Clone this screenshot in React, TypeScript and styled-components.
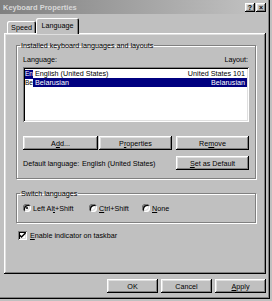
import React from "react";
import styled, { createGlobalStyle, css } from "styled-components";

const FACE = "#c0c0c0";
const FONT = `"Liberation Sans", Arial, sans-serif`;

const GlobalStyle = createGlobalStyle`
  html, body { margin: 0; padding: 0; background: ${FACE}; }
  body { font-family: ${FONT}; font-size: 7.2px; line-height: 9px; color: #000; }
  *, *::before, *::after { box-sizing: border-box; }
`;

const raised = css`
  box-shadow: inset -1px -1px #000, inset 1px 1px #fff, inset -2px -2px #808080,
    inset 2px 2px #dfdfdf;
`;
const sunken = css`
  box-shadow: inset 1px 1px #808080, inset -1px -1px #fff, inset 2px 2px #000,
    inset -2px -2px #dfdfdf;
`;

const Window = styled.div`
  width: 270px;
  height: 299px;
  background: ${FACE};
  box-shadow: inset -1px -1px #000, inset -2px -2px #808080;
  display: flex;
  flex-direction: column;
`;

const TitleBar = styled.div`
  height: 14px;
  margin-right: 2px;
  padding: 0 2px 0 3px;
  display: flex;
  align-items: center;
  justify-content: space-between;
  background: linear-gradient(to right, #808080, #c4c4c4);
  color: #d8d8d8;
  font-weight: bold;
  font-size: 7.5px;
`;

const TitleButtons = styled.div`
  display: flex;
  gap: 1px;
`;

const TitleButton = styled.div`
  width: 10px;
  height: 9px;
  background: ${FACE};
  ${raised};
  color: #000;
  font-weight: bold;
  font-size: 7px;
  line-height: 9px;
  display: flex;
  align-items: center;
  justify-content: center;
`;

const Body = styled.div`
  display: flex;
  flex-direction: column;
  padding: 0 4px;
`;

const TabStrip = styled.div`
  height: 15px;
  margin-top: 4px;
  padding-left: 3px;
  display: flex;
  align-items: flex-end;
`;

const Tab = styled.div<{ $w: number; $active?: boolean }>`
  width: ${(p) => p.$w}px;
  height: ${(p) => (p.$active ? 16 : 12)}px;
  margin-bottom: ${(p) => (p.$active ? -1 : 0)}px;
  position: relative;
  z-index: ${(p) => (p.$active ? 1 : 0)};
  background: ${FACE};
  border-radius: 2px 2px 0 0;
  box-shadow: inset 1px 1px #fff, inset -1px 0 #000, inset -2px 0 #808080;
  display: flex;
  align-items: ${(p) => (p.$active ? "flex-start" : "center")};
  padding-top: ${(p) => (p.$active ? 3 : 0)}px;
  justify-content: center;
`;

const Panel = styled.div`
  height: 241px;
  background: ${FACE};
  ${raised};
  padding: 8px 10px 0 12px;
  display: flex;
  flex-direction: column;
`;

const Group = styled.fieldset<{ $mt?: number }>`
  margin: ${(p) => p.$mt ?? 0}px 0 0 0;
  padding: 0;
  min-inline-size: 0;
  border: 1px solid #808080;
  box-shadow: 1px 1px #fff, inset 1px 1px #fff;
`;

const Legend = styled.legend`
  margin-left: 3px;
  padding: 0 1px;
  line-height: 9px;
`;

const GroupBody = styled.div<{ $pad: string }>`
  padding: ${(p) => p.$pad};
  display: flex;
  flex-direction: column;
`;

const HeaderRow = styled.div`
  display: flex;
  justify-content: space-between;
  padding: 0 1px 0 0;
`;

const ListBox = styled.div`
  height: 55px;
  margin-top: 3px;
  background: #fff;
  ${sunken};
  padding: 2px;
  display: flex;
  flex-direction: column;
`;

const ListRow = styled.div<{ $selected?: boolean }>`
  height: 9px;
  display: flex;
  align-items: center;
  gap: 2px;
  padding-right: 2px;
  background: ${(p) => (p.$selected ? "#000080" : "transparent")};
  color: ${(p) => (p.$selected ? "#fff" : "#000")};
`;

const LangIcon = styled.span<{ $inverse?: boolean }>`
  width: 8px;
  height: 8px;
  flex: none;
  font-size: 6.5px;
  line-height: 8px;
  text-align: center;
  background: ${(p) => (p.$inverse ? "#fff" : "#000080")};
  color: ${(p) => (p.$inverse ? "#000" : "#fff")};
`;

const Grow = styled.span`
  flex: 1;
`;

const ButtonRow = styled.div<{ $mt: number }>`
  display: flex;
  align-items: center;
  margin-top: ${(p) => p.$mt}px;
`;

const Button = styled.div<{ $w: number; $ml?: string }>`
  width: ${(p) => p.$w}px;
  height: 14px;
  margin-left: ${(p) => p.$ml ?? "0"};
  background: ${FACE};
  ${raised};
  display: flex;
  align-items: center;
  justify-content: center;
  flex: none;
`;

const FieldLabel = styled.span<{ $w: number }>`
  width: ${(p) => p.$w}px;
  flex: none;
`;

const U = styled.span`
  text-decoration: underline;
`;

const RadioRow = styled.div`
  display: flex;
  align-items: center;
  height: 10px;
`;

const RadioItem = styled.label<{ $w: number }>`
  width: ${(p) => p.$w}px;
  display: flex;
  align-items: center;
  gap: 2px;
`;

const Radio = styled.span<{ $checked?: boolean }>`
  width: 8px;
  height: 8px;
  border-radius: 50%;
  background: #fff;
  flex: none;
  box-shadow: inset 1px 1px #808080, inset -1px -1px #fff, inset 2px 2px #000,
    inset -2px -2px #dfdfdf;
  display: flex;
  align-items: center;
  justify-content: center;
  &::after {
    content: "";
    width: 2px;
    height: 2px;
    border-radius: 50%;
    background: ${(p) => (p.$checked ? "#000" : "transparent")};
  }
`;

const CheckRow = styled.label`
  display: flex;
  align-items: center;
  gap: 3px;
  margin: 8px 0 0 2px;
`;

const CheckBox = styled.span`
  width: 9px;
  height: 9px;
  background: #fff;
  ${sunken};
  flex: none;
  display: flex;
  align-items: center;
  justify-content: center;
`;

const Footer = styled.div`
  display: flex;
  justify-content: flex-end;
  gap: 3px;
  margin-top: 5px;
`;

export default function App() {
  return (
    <>
      <GlobalStyle />
      <Window>
        <TitleBar>
          <span>Keyboard Properties</span>
          <TitleButtons>
            <TitleButton>?</TitleButton>
            <TitleButton>×</TitleButton>
          </TitleButtons>
        </TitleBar>
        <Body>
          <TabStrip>
            <Tab $w={29}>Speed</Tab>
            <Tab $w={43} $active>
              Language
            </Tab>
          </TabStrip>
          <Panel>
            <Group>
              <Legend>Installed keyboard languages and layouts</Legend>
              <GroupBody $pad="5px 6px 8px 6px">
                <HeaderRow>
                  <span>Language:</span>
                  <span>Layout:</span>
                </HeaderRow>
                <ListBox>
                  <ListRow>
                    <LangIcon>En</LangIcon>
                    <Grow>English (United States)</Grow>
                    <span>United States 101</span>
                  </ListRow>
                  <ListRow $selected>
                    <LangIcon $inverse>Be</LangIcon>
                    <Grow>Belarusian</Grow>
                    <span>Belarusian</span>
                  </ListRow>
                </ListBox>
                <ButtonRow $mt={14}>
                  <Button $w={75}>
                    <span>
                      A<U>d</U>d...
                    </span>
                  </Button>
                  <Button $w={73} $ml="1px">
                    <span>
                      P<U>r</U>operties
                    </span>
                  </Button>
                  <Button $w={73} $ml="auto">
                    <span>
                      Re<U>m</U>ove
                    </span>
                  </Button>
                </ButtonRow>
                <ButtonRow $mt={6}>
                  <FieldLabel $w={59}>Default language:</FieldLabel>
                  <span>English (United States)</span>
                  <Button $w={73} $ml="auto">
                    <span>
                      <U>S</U>et as Default
                    </span>
                  </Button>
                </ButtonRow>
              </GroupBody>
            </Group>
            <Group $mt={10}>
              <Legend>Switch languages</Legend>
              <GroupBody $pad="5px 6px 9px 6px">
                <RadioRow>
                  <RadioItem $w={66}>
                    <Radio $checked />
                    <span>
                      Left Al<U>t</U>+Shift
                    </span>
                  </RadioItem>
                  <RadioItem $w={53}>
                    <Radio />
                    <span>
                      <U>C</U>trl+Shift
                    </span>
                  </RadioItem>
                  <RadioItem $w={50}>
                    <Radio />
                    <span>
                      <U>N</U>one
                    </span>
                  </RadioItem>
                </RadioRow>
              </GroupBody>
            </Group>
            <CheckRow>
              <CheckBox>
                <svg width="7" height="7" viewBox="0 0 7 7">
                  <path d="M0.5 3 L2.5 5 L6.5 1" stroke="#000" strokeWidth="1.5" fill="none" />
                </svg>
              </CheckBox>
              <span>
                <U>E</U>nable indicator on taskbar
              </span>
            </CheckRow>
          </Panel>
          <Footer>
            <Button $w={51}>OK</Button>
            <Button $w={51}>Cancel</Button>
            <Button $w={51}>
              <span>
                <U>A</U>pply
              </span>
            </Button>
          </Footer>
        </Body>
      </Window>
    </>
  );
}
